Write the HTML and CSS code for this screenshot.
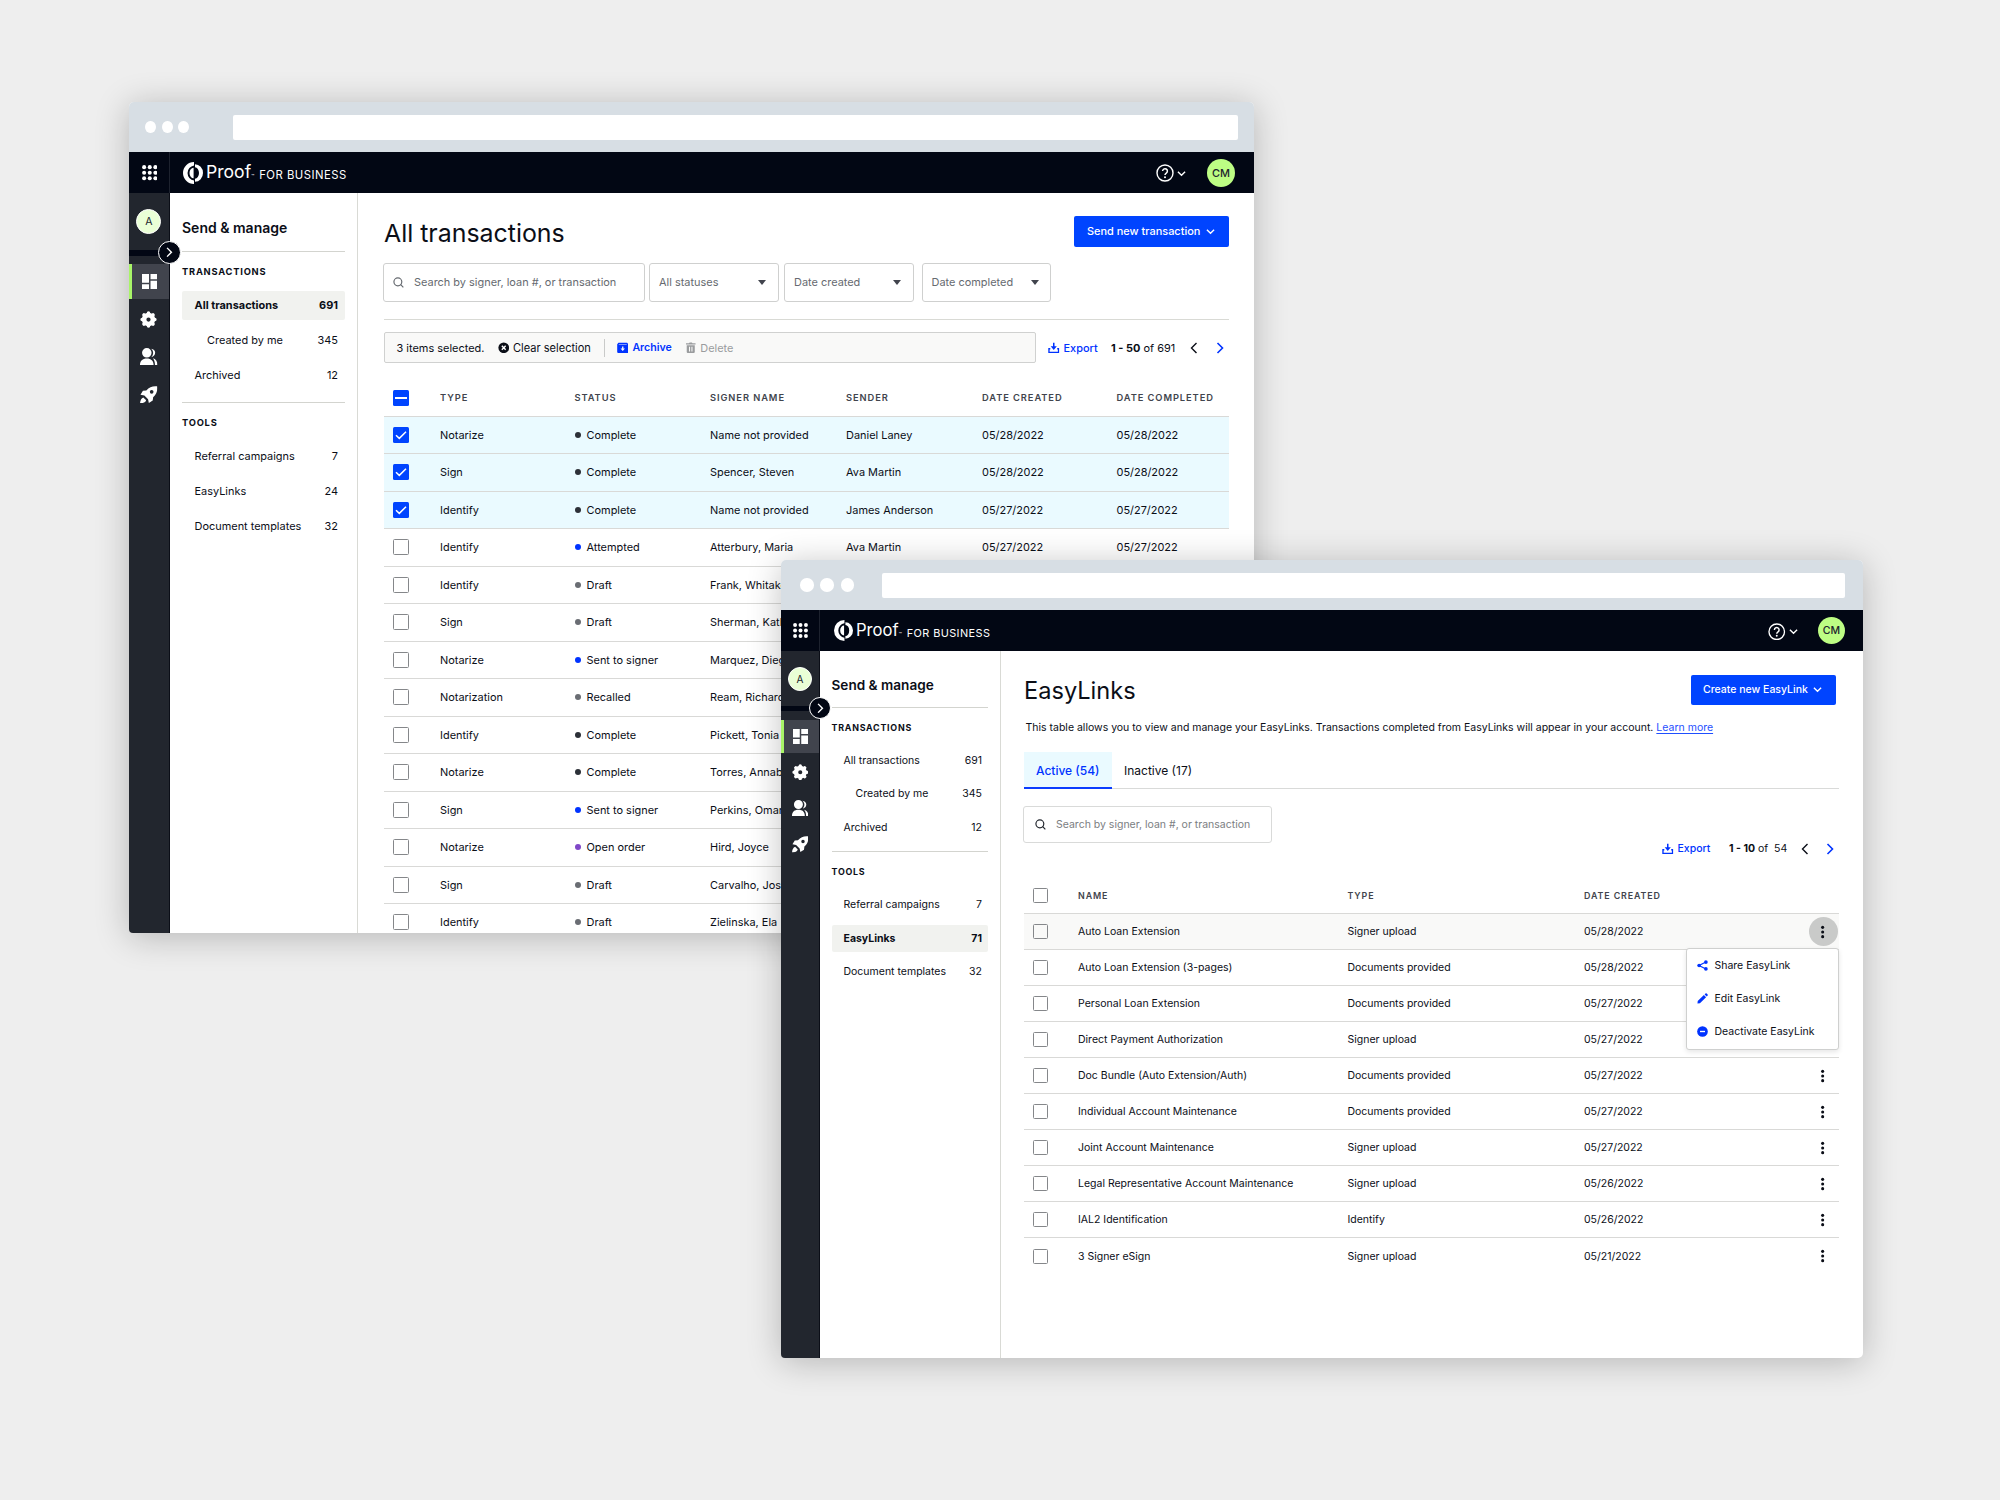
FILE: index.html
```
<!DOCTYPE html>
<html lang="en">
<head>
    <meta charset="UTF-8">
    <meta name="viewport" content="width=device-width, initial-scale=1.0">
    <title>Proof for Business</title>
    <link rel="stylesheet" href="styles.css">
</head>
<body>

<svg class="sprite">
    <symbol id="i-apps" viewBox="0 0 16 16"><g fill="currentColor"><circle cx="2.2" cy="2.2" r="2.1"/><circle cx="8" cy="2.2" r="2.1"/><circle cx="13.8" cy="2.2" r="2.1"/><circle cx="2.2" cy="8" r="2.1"/><circle cx="8" cy="8" r="2.1"/><circle cx="13.8" cy="8" r="2.1"/><circle cx="2.2" cy="13.8" r="2.1"/><circle cx="8" cy="13.8" r="2.1"/><circle cx="13.8" cy="13.8" r="2.1"/></g></symbol>
    <symbol id="i-logo" viewBox="0 0 20 22"><path fill="currentColor" d="M11 0v3.400A7.700 7.700 0 0 0 11 18.600V22A11 11 0 0 1 11 0zM12 2.300A8 8.700 0 0 1 12 19.700V16.800A4 5.800 0 0 0 12 5.200zM10.600 5.800V16.200A4.100 5.200 0 0 1 10.600 5.800z"/></symbol>
    <symbol id="i-help" viewBox="0 0 18 18"><g fill="none" stroke="currentColor"><circle cx="9" cy="9" r="8" stroke-width="1.400"/><path stroke-width="1.500" d="M6.600 7.100a2.400 2.400 0 1 1 3.700 2c-.9.600-1.300 1-1.300 2"/></g><circle cx="9" cy="13.200" r="1" fill="currentColor"/></symbol>
    <symbol id="i-down" viewBox="0 0 10 10"><path fill="none" stroke="currentColor" stroke-width="1.500" d="M1 3l4 4 4-4"/></symbol>
    <symbol id="i-right" viewBox="0 0 12 12"><path fill="none" stroke="currentColor" stroke-width="1.600" d="M3.500 1l5 5-5 5"/></symbol>
    <symbol id="i-left" viewBox="0 0 12 12"><path fill="none" stroke="currentColor" stroke-width="1.400" d="M8.500 1l-5 5 5 5"/></symbol>
    <symbol id="i-dash" viewBox="0 0 16 16"><path fill="currentColor" d="M0 0h7.200v9H0zM8.800 0H16v5.300H8.800zM0 10.600h7.200V16H0zM8.800 7H16v9H8.800z"/></symbol>
    <symbol id="i-gear" viewBox="0 0 24 24"><g fill="none" stroke="currentColor"><circle cx="12" cy="12" r="6.200" stroke-width="6.400"/><path stroke-width="5" stroke-linecap="round" d="M12 3v1M12 20v1M3 12h1M20 12h1M5.600 5.600l.7.700M17.700 17.700l.7.700M18.400 5.600l-.7.700M6.300 17.700l-.7.700"/></g></symbol>
    <symbol id="i-people" viewBox="0 0 18 18"><path fill="currentColor" d="M7 0a4.900 4.900 0 0 1 0 9.800A4.900 4.900 0 0 1 7 0zM0 17.500c0-4.600 2.700-6.800 7-6.800s7 2.200 7 6.800zM11.300.7c2.600.3 4.300 2 4.300 4.300 0 2.200-1.600 4-4 4.400 1.200-1.200 1.900-2.700 1.900-4.500 0-1.700-.8-3.200-2.200-4.200zM13.200 10.600c3 .7 4.800 3.300 4.800 6.900h-2.600c0-2.900-.7-5.200-2.200-6.900z"/></symbol>
    <symbol id="i-rocket" viewBox="0 0 18 18"><path fill="currentColor" fill-rule="evenodd" d="M17.700.3c.5 4.500-.6 8-4.200 11.200l-.4 3.500-4 2.500-.8-4-3.800-3.800-4-.8L3 5l3.500-.5C9.700.9 13.200-.2 17.700.3zM12 4.100a1.900 1.900 0 1 0 0 3.800 1.900 1.900 0 0 0 0-3.800z"/><path fill="currentColor" d="M3.400 11.700l2.900 2.900c-.6 2-2.800 3.100-6.300 3.400.3-3.500 1.400-5.700 3.400-6.300z"/></symbol>
    <symbol id="i-search" viewBox="0 0 12 12"><g fill="none" stroke="currentColor" stroke-width="1.300"><circle cx="5.300" cy="5.300" r="4.300"/><path d="M8.400 8.400l2.900 2.900"/></g></symbol>
    <symbol id="i-clear" viewBox="0 0 12 12"><circle cx="6" cy="6" r="5.600" fill="currentColor"/><path stroke="#fff" stroke-width="1.500" d="M4 4l4 4M8 4l-4 4"/></symbol>
    <symbol id="i-archive" viewBox="0 0 12 12"><path fill="currentColor" fill-rule="evenodd" d="M1.500.8h9l1.300 1.500v8.200c0 .6-.4 1-1 1H1.200c-.6 0-1-.4-1-1V2.300zM1.600 2.700h8.800l-.5-.7H2.100zM5.300 4.800v2.100H3.700L6 9.300l2.300-2.400H6.700V4.800z"/></symbol>
    <symbol id="i-trash" viewBox="0 0 12 12"><path fill="currentColor" fill-rule="evenodd" d="M1 1.200h3.200l.6-.7h2.400l.6.700H11v1.400H1zM1.800 3.300h8.400v7.200c0 .6-.4 1-1 1H2.800c-.6 0-1-.4-1-1zM4.200 5v4.800h1.100V5zM6.700 5v4.800h1.100V5z"/></symbol>
    <symbol id="i-export" viewBox="0 0 12 12"><path fill="none" stroke="currentColor" stroke-width="1.400" d="M2.400 7H1v4h10V7H9.600"/><path fill="currentColor" d="M5.200.8h1.600v3.700h2.400L6 8.300 2.800 4.500h2.400z"/></symbol>
    <symbol id="i-check" viewBox="0 0 16 16"><path fill="none" stroke="currentColor" stroke-width="1.500" d="M3 8.200l3.300 3.200L13 4.700"/></symbol>
    <symbol id="i-kebab" viewBox="0 0 6 16"><g fill="currentColor"><circle cx="3" cy="2.700" r="1.750"/><circle cx="3" cy="8" r="1.750"/><circle cx="3" cy="13.300" r="1.750"/></g></symbol>
    <symbol id="i-share" viewBox="0 0 12 12"><path stroke="currentColor" stroke-width="1.300" d="M9.700 2.200L2.200 6l7.500 3.800" fill="none"/><g fill="currentColor"><circle cx="9.700" cy="2.300" r="2"/><circle cx="2.300" cy="6" r="2"/><circle cx="9.700" cy="9.700" r="2"/></g></symbol>
    <symbol id="i-edit" viewBox="0 0 12 12"><path fill="currentColor" d="M.5 11.500l.3-2.700 6.700-6.600 2.400 2.400-6.700 6.600zM8.300 1.500l1-1c.4-.4.9-.4 1.200 0l1.100 1.100c.4.400.4.900 0 1.200l-1 1z"/></symbol>
    <symbol id="i-minus" viewBox="0 0 12 12"><circle cx="6" cy="6" r="5.800" fill="currentColor"/><path stroke="#fff" stroke-width="1.500" d="M3.300 6h5.400"/></symbol>
</svg>

<!-- All transactions -->
<div class="window window-back">
    <div class="chrome">
        <span class="light"></span><span class="light"></span><span class="light"></span>
        <div class="address"></div>
    </div>
    <header class="topbar">
        <div class="apps"><svg class="icon"><use href="#i-apps"/></svg></div>
        <div class="brand">
            <svg class="logo"><use href="#i-logo"/></svg>
            <span class="proof">Proof</span><span class="tm">™</span><span class="business">FOR BUSINESS</span>
        </div>
        <svg class="help"><use href="#i-help"/></svg>
        <svg class="help-arrow"><use href="#i-down"/></svg>
        <span class="avatar">CM</span>
    </header>
    <div class="body">
        <nav class="rail">
            <span class="org">A</span>
            <div class="rail-split"><span class="toggle"><svg><use href="#i-right"/></svg></span></div>
            <a class="rail-item active"><svg class="icon"><use href="#i-dash"/></svg></a>
            <a class="rail-item"><svg class="icon gear"><use href="#i-gear"/></svg></a>
            <a class="rail-item"><svg class="icon people"><use href="#i-people"/></svg></a>
            <a class="rail-item"><svg class="icon people"><use href="#i-rocket"/></svg></a>
        </nav>
        <aside class="panel">
            <h2>Send &amp; manage</h2>
            <section>
                <h3>Transactions</h3>
                <a class="link current"><span>All transactions</span><span>691</span></a>
                <a class="link sub"><span>Created by me</span><span>345</span></a>
                <a class="link"><span>Archived</span><span>12</span></a>
            </section>
            <section>
                <h3>Tools</h3>
                <a class="link"><span>Referral campaigns</span><span>7</span></a>
                <a class="link"><span>EasyLinks</span><span>24</span></a>
                <a class="link"><span>Document templates</span><span>32</span></a>
            </section>
        </aside>
        <main class="main">
            <div class="head">
                <h1>All transactions</h1>
                <button class="button">Send new transaction<svg><use href="#i-down"/></svg></button>
            </div>
            <div class="filters">
                <div class="search"><svg><use href="#i-search"/></svg>Search by signer, loan #, or transaction</div>
                <div class="select">All statuses<i class="caret"></i></div>
                <div class="select">Date created<i class="caret"></i></div>
                <div class="select">Date completed<i class="caret"></i></div>
            </div>
            <div class="actions">
                <div class="selection">
                    <span class="count">3 items selected.</span>
                    <span class="action clear"><svg><use href="#i-clear"/></svg>Clear selection</span>
                    <span class="action archive"><svg><use href="#i-archive"/></svg>Archive</span>
                    <span class="action delete"><svg><use href="#i-trash"/></svg>Delete</span>
                </div>
                <div class="pager">
                    <span class="export"><svg><use href="#i-export"/></svg>Export</span>
                    <span class="range"><b>1 - 50</b> of 691</span>
                    <svg class="prev"><use href="#i-left"/></svg>
                    <svg class="next"><use href="#i-right"/></svg>
                </div>
            </div>
            <div class="table">
                <div class="row header"><span><i class="box some"></i></span><span>Type</span><span>Status</span><span>Signer name</span><span>Sender</span><span>Date created</span><span>Date completed</span></div>
                <div class="row selected"><span><i class="box on"><svg><use href="#i-check"/></svg></i></span><span>Notarize</span><span class="status complete">Complete</span><span>Name not provided</span><span>Daniel Laney</span><span>05/28/2022</span><span>05/28/2022</span></div>
                <div class="row selected"><span><i class="box on"><svg><use href="#i-check"/></svg></i></span><span>Sign</span><span class="status complete">Complete</span><span>Spencer, Steven</span><span>Ava Martin</span><span>05/28/2022</span><span>05/28/2022</span></div>
                <div class="row selected"><span><i class="box on"><svg><use href="#i-check"/></svg></i></span><span>Identify</span><span class="status complete">Complete</span><span>Name not provided</span><span>James Anderson</span><span>05/27/2022</span><span>05/27/2022</span></div>
                <div class="row"><span><i class="box"></i></span><span>Identify</span><span class="status sent">Attempted</span><span>Atterbury, Maria</span><span>Ava Martin</span><span>05/27/2022</span><span>05/27/2022</span></div>
                <div class="row"><span><i class="box"></i></span><span>Identify</span><span class="status">Draft</span><span>Frank, Whitaker</span></div>
                <div class="row"><span><i class="box"></i></span><span>Sign</span><span class="status">Draft</span><span>Sherman, Kathy</span></div>
                <div class="row"><span><i class="box"></i></span><span>Notarize</span><span class="status sent">Sent to signer</span><span>Marquez, Diego</span></div>
                <div class="row"><span><i class="box"></i></span><span>Notarization</span><span class="status">Recalled</span><span>Ream, Richard</span></div>
                <div class="row"><span><i class="box"></i></span><span>Identify</span><span class="status complete">Complete</span><span>Pickett, Tonia</span></div>
                <div class="row"><span><i class="box"></i></span><span>Notarize</span><span class="status complete">Complete</span><span>Torres, Annabel</span></div>
                <div class="row"><span><i class="box"></i></span><span>Sign</span><span class="status sent">Sent to signer</span><span>Perkins, Omar</span></div>
                <div class="row"><span><i class="box"></i></span><span>Notarize</span><span class="status open">Open order</span><span>Hird, Joyce</span></div>
                <div class="row"><span><i class="box"></i></span><span>Sign</span><span class="status">Draft</span><span>Carvalho, Jose</span></div>
                <div class="row"><span><i class="box"></i></span><span>Identify</span><span class="status">Draft</span><span>Zielinska, Ela</span></div>
            </div>
        </main>
    </div>
</div>

<!-- EasyLinks -->
<div class="window window-front">
    <div class="chrome">
        <span class="light"></span><span class="light"></span><span class="light"></span>
        <div class="address"></div>
    </div>
    <header class="topbar">
        <div class="apps"><svg class="icon"><use href="#i-apps"/></svg></div>
        <div class="brand">
            <svg class="logo"><use href="#i-logo"/></svg>
            <span class="proof">Proof</span><span class="tm">™</span><span class="business">FOR BUSINESS</span>
        </div>
        <svg class="help"><use href="#i-help"/></svg>
        <svg class="help-arrow"><use href="#i-down"/></svg>
        <span class="avatar">CM</span>
    </header>
    <div class="body">
        <nav class="rail">
            <span class="org">A</span>
            <div class="rail-split"><span class="toggle"><svg><use href="#i-right"/></svg></span></div>
            <a class="rail-item active"><svg class="icon"><use href="#i-dash"/></svg></a>
            <a class="rail-item"><svg class="icon gear"><use href="#i-gear"/></svg></a>
            <a class="rail-item"><svg class="icon people"><use href="#i-people"/></svg></a>
            <a class="rail-item"><svg class="icon people"><use href="#i-rocket"/></svg></a>
        </nav>
        <aside class="panel">
            <h2>Send &amp; manage</h2>
            <section>
                <h3>Transactions</h3>
                <a class="link"><span>All transactions</span><span>691</span></a>
                <a class="link sub"><span>Created by me</span><span>345</span></a>
                <a class="link"><span>Archived</span><span>12</span></a>
            </section>
            <section>
                <h3>Tools</h3>
                <a class="link"><span>Referral campaigns</span><span>7</span></a>
                <a class="link current"><span>EasyLinks</span><span>71</span></a>
                <a class="link"><span>Document templates</span><span>32</span></a>
            </section>
        </aside>
        <main class="main">
            <div class="head">
                <h1>EasyLinks</h1>
                <button class="button">Create new EasyLink<svg><use href="#i-down"/></svg></button>
            </div>
            <p class="intro">This table allows you to view and manage your EasyLinks. Transactions completed from EasyLinks will appear in your account. <a>Learn more</a></p>
            <div class="tabs"><a class="tab active">Active (54)</a><a class="tab">Inactive (17)</a></div>
            <div class="toolbar">
                <div class="search"><svg><use href="#i-search"/></svg>Search by signer, loan #, or transaction</div>
                <div class="pager">
                    <span class="export"><svg><use href="#i-export"/></svg>Export</span>
                    <span class="range"><b>1 - 10</b> of &nbsp;54</span>
                    <svg class="prev"><use href="#i-left"/></svg>
                    <svg class="next"><use href="#i-right"/></svg>
                </div>
            </div>
            <div class="table">
                <div class="row header"><span><i class="box"></i></span><span>Name</span><span>Type</span><span>Date created</span></div>
                <div class="row hover"><span><i class="box"></i></span><span>Auto Loan Extension</span><span>Signer upload</span><span>05/28/2022</span>
                    <span class="more open"><svg><use href="#i-kebab"/></svg>
                        <div class="menu">
                            <a><svg><use href="#i-share"/></svg>Share EasyLink</a>
                            <a><svg><use href="#i-edit"/></svg>Edit EasyLink</a>
                            <a><svg><use href="#i-minus"/></svg>Deactivate EasyLink</a>
                        </div>
                    </span>
                </div>
                <div class="row"><span><i class="box"></i></span><span>Auto Loan Extension (3-pages)</span><span>Documents provided</span><span>05/28/2022</span></div>
                <div class="row"><span><i class="box"></i></span><span>Personal Loan Extension</span><span>Documents provided</span><span>05/27/2022</span></div>
                <div class="row"><span><i class="box"></i></span><span>Direct Payment Authorization</span><span>Signer upload</span><span>05/27/2022</span></div>
                <div class="row"><span><i class="box"></i></span><span>Doc Bundle (Auto Extension/Auth)</span><span>Documents provided</span><span>05/27/2022</span><span class="more"><svg><use href="#i-kebab"/></svg></span></div>
                <div class="row"><span><i class="box"></i></span><span>Individual Account Maintenance</span><span>Documents provided</span><span>05/27/2022</span><span class="more"><svg><use href="#i-kebab"/></svg></span></div>
                <div class="row"><span><i class="box"></i></span><span>Joint Account Maintenance</span><span>Signer upload</span><span>05/27/2022</span><span class="more"><svg><use href="#i-kebab"/></svg></span></div>
                <div class="row"><span><i class="box"></i></span><span>Legal Representative Account Maintenance</span><span>Signer upload</span><span>05/26/2022</span><span class="more"><svg><use href="#i-kebab"/></svg></span></div>
                <div class="row"><span><i class="box"></i></span><span>IAL2 Identification</span><span>Identify</span><span>05/26/2022</span><span class="more"><svg><use href="#i-kebab"/></svg></span></div>
                <div class="row last"><span><i class="box"></i></span><span>3 Signer eSign</span><span>Signer upload</span><span>05/21/2022</span><span class="more"><svg><use href="#i-kebab"/></svg></span></div>
            </div>
        </main>
    </div>
</div>

</body>
</html>
```
FILE: styles.css
```
* {
    box-sizing: border-box;
}
html,
body {
    width: 100%;
    height: 100%;
    margin: 0;
    padding: 0;
}
body {
    position: relative;
    overflow: hidden;
    background-color: #eeeeee;
    color: #0b0e17;
    font-family: Inter, "Liberation Sans", sans-serif;
}
h1, h2, h3, p {
    margin: 0;
}
svg {
    display: block;
    flex: none;
}
.sprite {
    position: absolute;
    width: 0;
    height: 0;
}

/* windows */
.window {
    position: absolute;
    display: flex;
    flex-direction: column;
    border-radius: 5px;
    background-color: #ffffff;
    box-shadow: 0 4px 34px rgba(0, 0, 0, .24);
}
.window-back {
    --text: 10.95px;
    --caps: 9.3px;
    --rail: 39.5px;
    --item: 28.5px;
    --item-gap: 6.7px;
    left: 129px;
    top: 102px;
    width: 1125px;
    height: 831px;
    font-size: var(--text);
}
.window-front {
    --text: 10.5px;
    --caps: 8.9px;
    --rail: 38px;
    --item: 27.3px;
    --item-gap: 6.3px;
    left: 781px;
    top: 560px;
    width: 1082px;
    height: 798px;
    font-size: var(--text);
}
.chrome {
    display: flex;
    align-items: center;
    flex: none;
    height: 50px;
    border-radius: 5px 5px 0 0;
    background-color: #d7dee4;
}
.light {
    width: 11px;
    height: 12.5px;
    margin-right: 5.5px;
    border-radius: 50%;
    background-color: #ffffff;
}
.light:first-child {
    margin-left: 16px;
}
.address {
    flex: 1;
    height: 25px;
    margin: 1px 16.5px 0 38.5px;
    border-radius: 2px;
    background-color: #ffffff;
}
.window-front .light {
    width: 13.5px;
    height: 13.5px;
    margin-right: 6.8px;
}
.window-front .light:first-child {
    margin-left: 19px;
}
.window-front .address {
    margin-right: 18px;
    margin-left: 21.3px;
}

/* top bar */
.topbar {
    display: flex;
    align-items: center;
    flex: none;
    height: 40.5px;
    padding-top: 1px;
    color: #ffffff;
    background-color: #020714;
}
.apps {
    display: flex;
    align-items: center;
    justify-content: center;
    width: calc(var(--rail) + 1px);
    height: 41px;
    padding-left: 1px;
    border-right: 1px solid #1d222e;
}
.icon {
    width: 15.5px;
    height: 15.5px;
}
.window-front .icon {
    width: 15px;
    height: 15px;
}
.brand {
    display: flex;
    align-items: baseline;
    flex: 1;
    padding-left: 13.5px;
}
.logo {
    align-self: center;
    width: 20px;
    height: 22px;
    margin-right: 3px;
}
.proof {
    font-size: 17.6px;
}
.tm {
    width: 8px;
    font-size: 5px;
}
.business {
    font-size: 11.3px;
    line-height: 20px;
    letter-spacing: .5px;
    transform: translateY(.5px);
}
.window-front .logo {
    width: 19px;
    height: 21px;
    margin-right: 3.5px;
}
.window-front .proof {
    font-size: 16.6px;
}
.window-front .business {
    font-size: 10.9px;
    letter-spacing: .42px;
}
.help {
    width: 18px;
    height: 18px;
    margin-top: 1px;
}
.help-arrow {
    width: 9px;
    height: 9px;
    margin: 1px 21px 0 3.5px;
}
.avatar {
    width: 28px;
    height: 28px;
    margin-right: 19px;
    border-radius: 50%;
    line-height: 28px;
    text-align: center;
    font-weight: 500;
    color: #20242c;
    background-color: #bdfd84;
}
.window-front .help {
    width: 17.5px;
    height: 17.5px;
}
.window-front .help-arrow {
    margin-right: 20px;
}
.window-front .avatar {
    width: 27px;
    height: 27px;
    margin-right: 18px;
    line-height: 27px;
}

/* left rail */
.body {
    display: flex;
    flex: 1;
    min-height: 0;
}
.rail {
    display: flex;
    flex-direction: column;
    flex: none;
    width: calc(var(--rail) + 1px);
    padding-top: 16.5px;
    border-right: 1px solid #0b0e17;
    border-radius: 0 0 0 4px;
    color: #ffffff;
    background-color: #22262e;
}
.org {
    align-self: center;
    width: 25px;
    height: 25px;
    border: 1.5px solid #ffffff;
    border-radius: 50%;
    line-height: 23px;
    text-align: center;
    font-weight: 400;
    font-size: 10.5px;
    color: #20242c;
    background-color: #eaffd6;
}
.rail-split {
    position: relative;
    height: 6px;
    margin: 16px 0 8px;
    background-color: #020714;
}
.toggle {
    position: absolute;
    right: -12px;
    top: -9px;
    display: flex;
    align-items: center;
    justify-content: center;
    width: 23px;
    height: 23px;
    border: 1px solid #ffffff;
    border-radius: 50%;
    background-color: #020714;
}
.toggle svg {
    width: 10.5px;
    height: 10.5px;
}
.rail-item {
    display: flex;
    align-items: center;
    justify-content: center;
    height: 35px;
    margin-bottom: 2.7px;
}
.rail-item.active {
    border-left: 3px solid #a8f468;
    padding-right: 2px;
    background-color: #41444d;
}
.icon.gear {
    width: 17px;
    height: 17px;
}
.icon.people {
    width: 17.5px;
    height: 17.5px;
}
.window-front .rail {
    padding-top: 16px;
}
.window-front .org {
    width: 24px;
    height: 24px;
    line-height: 22px;
    font-size: 10px;
}
.window-front .rail-split {
    height: 5px;
    margin: 15.5px 0 8.5px;
}
.window-front .toggle {
    width: 22px;
    height: 22px;
}
.window-front .rail-item {
    height: 33px;
    margin-bottom: 3.1px;
}
.window-front .icon.gear,
.window-front .icon.people {
    width: 16.5px;
    height: 16.5px;
}

/* navigation panel */
.panel {
    flex: none;
    width: 188.5px;
    padding: 27.5px 12.5px 0 12.5px;
    border-right: 1px solid #d9dad5;
}
.panel h2 {
    padding-bottom: 15px;
    line-height: 16px;
    font-size: 14px;
    font-weight: 600;
}
.panel section {
    padding-bottom: 5.5px;
    border-top: 1px solid #d3d4cf;
}
.panel h3 {
    padding: 13px 0 12px;
    line-height: 14px;
    font-size: var(--caps);
    font-weight: 700;
    letter-spacing: .085em;
    text-transform: uppercase;
}
.link {
    display: flex;
    justify-content: space-between;
    height: var(--item);
    margin-bottom: var(--item-gap);
    padding: 0 6.5px 0 12.5px;
    border-radius: 2px;
    line-height: var(--item);
}
.link.sub {
    padding-left: 25px;
}
.link.current {
    font-weight: 700;
    background-color: #f1f2ef;
}
.window-front .panel {
    width: 181px;
    padding: 26.5px 12px 0 11.5px;
}
.window-front .panel h2 {
    padding-bottom: 13.5px;
    font-size: 13.6px;
}
.window-front .panel section {
    padding-bottom: 4px;
}
.window-front .link {
    padding: 0 6px 0 12px;
}
.window-front .link.sub {
    padding-left: 24px;
}

/* content */
.main {
    flex: 1;
    min-width: 0;
    overflow: hidden;
    padding: 23.5px 25px 0 26px;
}
.head {
    display: flex;
    align-items: flex-start;
    justify-content: space-between;
    height: 31px;
}
.head h1 {
    margin-top: 2px;
    line-height: 31px;
    font-size: 24.9px;
    font-weight: 400;
}
.button {
    display: flex;
    align-items: center;
    justify-content: space-between;
    width: 155px;
    height: 31px;
    padding: 0 14px 1px 13px;
    border: none;
    border-radius: 2px;
    font-family: inherit;
    font-size: var(--text);
    font-weight: 500;
    color: #ffffff;
    background-color: #0044ff;
}
.button svg {
    width: 9px;
    height: 9px;
}
.filters {
    display: flex;
    margin: 15.5px 0 16.5px -1px;
}
.search,
.select {
    display: flex;
    align-items: center;
    height: 39.5px;
    border: 1.5px solid #cfd0cf;
    border-radius: 3px;
    color: #666a70;
}
.search {
    width: 262px;
    padding-left: 9px;
}
.search svg {
    width: 11px;
    height: 11px;
    margin-right: 10px;
}
.select {
    justify-content: space-between;
    width: 129.5px;
    margin-left: 5.5px;
    padding: 0 11.5px 0 9px;
}
.select:nth-child(2) {
    margin-left: 4px;
}
.select:last-child {
    margin-left: 8px;
}
.caret {
    border: 4.5px solid transparent;
    border-top: 5px solid #41444d;
    border-bottom: none;
}
.actions {
    display: flex;
    align-items: center;
    padding-top: 12.5px;
    border-top: 1px solid #d9dad5;
}
.selection {
    display: flex;
    align-items: center;
    width: 651.5px;
    height: 31px;
    padding-left: 11.5px;
    border: 1.5px solid #d0d1d0;
    border-radius: 2px;
    background-color: #f9f9f8;
}
.count {
    width: 101px;
}
.action {
    display: flex;
    align-items: center;
}
.action svg {
    width: 11.5px;
    height: 11.5px;
    margin-right: 4px;
}
.clear {
    padding-right: 13px;
    border-right: 1px solid #c9cac9;
    line-height: 18px;
    font-size: 11.05px;
}
.archive {
    padding: 0 13px 0 12px;
    font-weight: 600;
    font-size: 10.6px;
    color: #0033ff;
}
.delete {
    color: #9a9c9e;
}
.pager {
    display: flex;
    align-items: center;
    flex: 1;
    padding-left: 12.5px;
    line-height: 16px;
}
.export {
    display: flex;
    align-items: center;
    width: 63px;
    font-weight: 500;
    color: #0033ff;
}
.export svg {
    width: 11.5px;
    height: 11.5px;
    margin-right: 4px;
}
.range {
    flex: 1;
}
.prev,
.next {
    width: 12px;
    height: 12px;
}
.prev {
    margin-right: 14px;
}
.next {
    margin-right: 3.5px;
    color: #0033ff;
}

/* tables */
.table {
    margin-top: 16.5px;
}
.row {
    display: grid;
    grid-template-columns: 56px 134.5px 135.5px 136px 136px 134.5px 1fr;
    align-items: center;
    height: 37.5px;
    border-bottom: 1px solid #d9d9d7;
    white-space: nowrap;
}
.row.header {
    height: 37px;
    font-size: var(--caps);
    font-weight: 600;
    letter-spacing: .1em;
    text-transform: uppercase;
    color: #41444d;
}
.row.selected {
    background-color: #eafaff;
}
.row.hover {
    background-color: #f9f9f8;
}
.row.last {
    border-bottom: none;
}
.box {
    display: block;
    width: 16px;
    height: 16px;
    margin-left: 9px;
    border: 1.5px solid #85878a;
    border-radius: 1.5px;
}
.box.on,
.box.some {
    border: none;
    color: #ffffff;
    background-color: #0044ff;
}
.box.on svg {
    width: 16px;
    height: 16px;
}
.box.some {
    padding: 7px 2px;
}
.box.some::before {
    content: "";
    display: block;
    height: 2px;
    background-color: #ffffff;
}
.status {
    display: flex;
    align-items: center;
}
.status::before {
    content: "";
    width: 6px;
    height: 6px;
    margin-right: 6px;
    border-radius: 50%;
    background-color: #6a6d73;
}
.status.complete::before {
    background-color: #2c3038;
}
.status.sent::before {
    background-color: #0033ff;
}
.status.open::before {
    background-color: #8048c8;
}

/* EasyLinks content */
.window-front .main {
    padding: 24.5px 24px 0 23px;
}
.window-front .head {
    height: 30px;
    padding-right: 3.5px;
}
.window-front .head h1 {
    margin-top: 1px;
    line-height: 30px;
    font-size: 23.6px;
}
.window-front .button {
    width: 144.5px;
    height: 30px;
    padding: 0 14px 1px 12px;
}
.intro {
    margin: 15.5px 0 17.5px 1.5px;
    line-height: 14px;
}
.intro a {
    color: #1f4fff;
    text-decoration: underline;
    text-underline-offset: 2px;
}
.tabs {
    display: flex;
    height: 36.5px;
    border-bottom: 1px solid #d9dad9;
    font-size: 12px;
}
.tab {
    padding: 0 12px;
    line-height: 37px;
}
.tab.active {
    width: 88px;
    height: 36.5px;
    border-bottom: 2px solid #0a3cff;
    font-weight: 500;
    color: #0033ff;
    background-color: #eafaff;
}
.toolbar {
    display: flex;
    align-items: flex-start;
    height: 51px;
    margin: 17px 0 0 -1px;
}
.toolbar .search {
    width: 249px;
    height: 37px;
    padding-left: 11px;
    border-color: #d9dad9;
    color: #7b7e82;
}
.toolbar .search svg {
    color: #22262e;
}
.toolbar .pager {
    align-self: flex-end;
    padding-left: 390px;
}
.toolbar .export {
    width: 67px;
}
.toolbar .prev {
    margin-right: 13px;
}
.window-front .table {
    margin-top: 20.5px;
}
.window-front .row {
    grid-template-columns: 54px 269.5px 236.5px 1fr 29px;
    height: 36.05px;
    padding-right: 1.5px;
}
.window-front .row.header {
    height: 37px;
}
.window-front .box {
    width: 15px;
    height: 15px;
}
.more {
    position: relative;
    display: flex;
    align-items: center;
    justify-content: center;
    width: 29px;
    height: 29px;
    border-radius: 50%;
    color: #0b0e17;
}
.more > svg {
    width: 5.3px;
    height: 14px;
}
.more.open {
    background-color: #c9cac9;
}
.menu {
    position: absolute;
    top: 31px;
    right: -1px;
    z-index: 1;
    width: 153px;
    padding: 0 0 1px 10px;
    border: 1.5px solid #cfd0cf;
    border-radius: 3px;
    background-color: #ffffff;
    box-shadow: 0 2px 5px rgba(0, 0, 0, .1);
}
.menu a {
    display: flex;
    align-items: center;
    height: 33px;
}
.menu svg {
    width: 11px;
    height: 11px;
    margin-right: 7px;
    color: #0033ff;
}
```
